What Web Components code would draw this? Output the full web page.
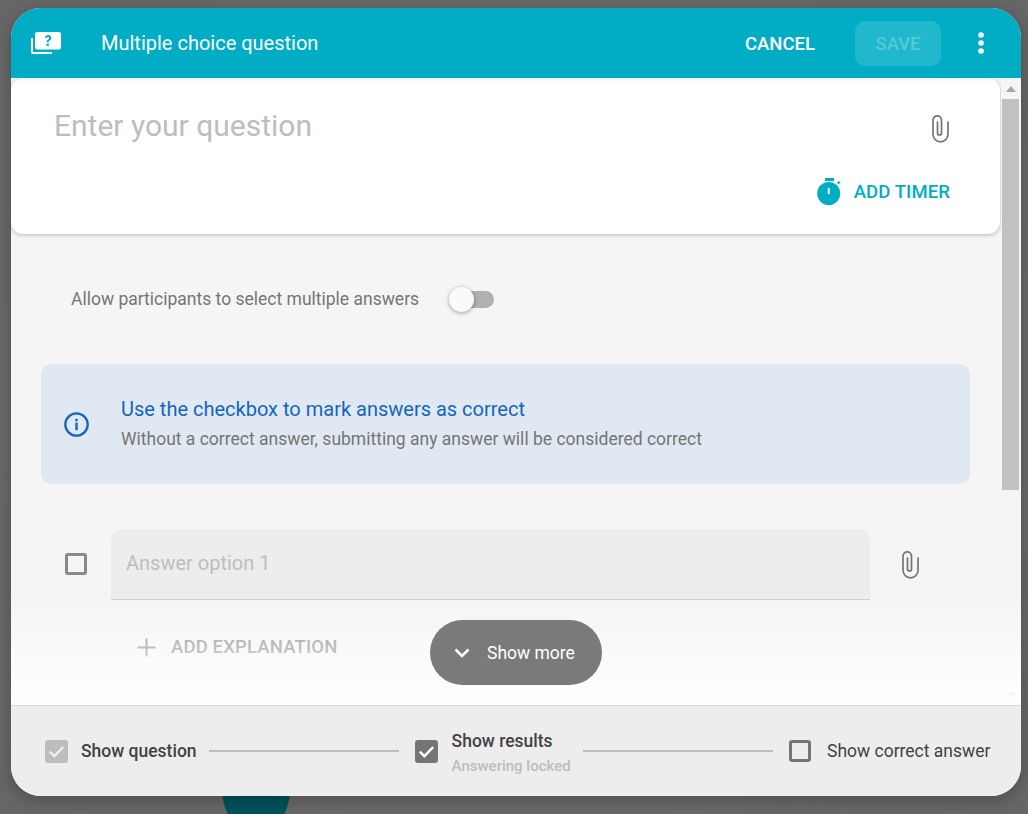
<!DOCTYPE html>
<html lang="en">
<head>
<meta charset="utf-8">
<title>Multiple choice question</title>
<style>
  html, body { margin: 0; height: 100%; overflow: hidden; background: #6b6b6b; font-family: Roboto, "Liberation Sans", sans-serif; }
</style>
</head>
<body>
<question-page></question-page>
<script>
// tiny base class, every element just has styles + markup
class Base extends HTMLElement {
  constructor() {
    super();
    this.attachShadow({ mode: "open" });
  }
  connectedCallback() {
    this.shadowRoot.innerHTML = `<style>${this.constructor.styles}</style>${this.markup()}`;
  }
}

class ClipIcon extends Base {
  static get styles() {
    return `:host { display: block; width: 18px; height: 30px; flex: none; }
      svg { display: block; }`;
  }
  markup() {
    return `<svg width="18" height="30" viewBox="0 0 18 30" fill="none" stroke="#757575" stroke-width="1.7" stroke-linecap="round">
      <path d="M17 8V20.35a7.5 7.5 0 0 1-15 0V6.1a4.25 4.25 0 0 1 8.5 0V19a2 2 0 0 1-4 0V8"/>
    </svg>`;
  }
}

class CheckBox extends Base {
  static get styles() {
    return `:host { display: block; width: 23px; height: 23px; flex: none; }
      div { box-sizing: border-box; width: 100%; height: 100%; border-radius: 3px; border: var(--edge, 3px) solid var(--box, #757575); }
      :host([checked]) div { background: var(--box, #757575); }
      svg { display: block; position: relative; left: -3px; top: -3px; }`;
  }
  markup() {
    const tick = this.hasAttribute("checked")
      ? `<svg width="23" height="23" viewBox="0 0 23 23" fill="none" stroke="${this.getAttribute("tick") || "#fff"}" stroke-width="2.4"><path d="M4.8 11.6l4.6 4.6 8.8-9.2"/></svg>`
      : "";
    return `<div>${tick}</div>`;
  }
}

class DialogHeader extends Base {
  static get styles() {
    return `:host { display: flex; align-items: center; flex: none; height: 70px; background: #00adc5; color: #fff; }
      .logo { margin-left: 19px; display: block; }
      h1 { margin: 0 0 0 40px; font-size: 20px; font-weight: 400; flex: 1; }
      .cancel { font-size: 18.5px; font-weight: 500; padding-top: 2px; }
      .save { box-sizing: border-box; width: 86px; height: 45px; margin: 0 0 0 40px; padding-top: 2px; border-radius: 10px; background: rgba(255,255,255,.13);
        display: flex; align-items: center; justify-content: center; font-size: 18.5px; font-weight: 500; color: rgba(255,255,255,.25); }
      .dots { margin: 0 35px; display: block; }`;
  }
  markup() {
    return `
      <svg class="logo" width="31" height="24" viewBox="0 0 31 24">
        <path d="M1 7h2v14h19v2H3a2 2 0 0 1-2-2z" fill="#fff"/>
        <path d="M5 3a2 2 0 0 1 2-2h22a2 2 0 0 1 2 2v13.5a2 2 0 0 1-2 2H7a2 2 0 0 1-2-2z" fill="#fff"/>
        <path d="M14.9 6.6c.3-1.6 1.5-2.5 3.2-2.5 1.9 0 3.2 1.1 3.2 2.8 0 1.3-.7 2-1.6 2.6-.8.5-1.1.9-1.1 1.8h-2c0-1.5.5-2.3 1.5-2.9.7-.5 1.1-.8 1.1-1.4 0-.7-.5-1.1-1.2-1.1-.8 0-1.2.4-1.4 1.2z" fill="#00adc5"/>
        <rect x="16.5" y="12.6" width="2.3" height="2.3" fill="#00adc5"/>
      </svg>
      <h1>Multiple choice question</h1>
      <span class="cancel">CANCEL</span>
      <span class="save">SAVE</span>
      <svg class="dots" width="10" height="22" viewBox="0 0 10 22" fill="#fff">
        <circle cx="5" cy="3" r="2.8"/><circle cx="5" cy="11" r="2.8"/><circle cx="5" cy="19" r="2.8"/>
      </svg>`;
  }
}

class QuestionCard extends Base {
  static get styles() {
    return `:host { display: block; box-sizing: border-box; height: 156px; margin-right: 1px; padding: 29px 50px 0 43px; background: #fff;
        border-radius: 12px; box-shadow: 0 1px 4px rgba(0,0,0,.25), inset 0 4px 4px -3px rgba(0,0,0,.08); }
      .top { display: flex; justify-content: space-between; align-items: flex-start; height: 71px; }
      .q { font-size: 30px; line-height: 38px; color: #bdbdbd; }
      question-clip { margin: 7px 1px 0 0; }
      .timer { display: flex; justify-content: flex-end; align-items: center; gap: 13px; color: #00adc5; font-size: 18.5px; font-weight: 500; letter-spacing: .1px; }
      .timer svg { display: block; }`;
  }
  markup() {
    return `
      <div class="top"><span class="q">Enter your question</span><question-clip></question-clip></div>
      <div class="timer">
        <svg width="24" height="28" viewBox="0 0 24 28">
          <rect x="8" y="0" width="9" height="3" fill="#00adc5"/>
          <circle cx="11.7" cy="15.5" r="11.5" fill="#00adc5"/>
          <path d="M20 4.6l2-1.6 1.4 1.6-1.8 1.8z" fill="#00adc5"/>
          <rect x="10.8" y="10" width="1.9" height="6.2" fill="#fff"/>
        </svg>
        <span>ADD TIMER</span>
      </div>`;
  }
}

class ToggleRow extends Base {
  static get styles() {
    return `:host { display: flex; align-items: center; padding: 53px 0 0 60px; height: 24px; font-size: 17.5px; color: #757575; }
      .track { position: relative; width: 41px; height: 17px; margin-left: 34px; border-radius: 9px; background: #b0b0b0; }
      .thumb { position: absolute; left: -4px; top: -4px; width: 25px; height: 25px; border-radius: 50%; background: #fafafa;
        box-shadow: 0 1px 4px rgba(0,0,0,.35); }`;
  }
  markup() {
    return `<span>Allow participants to select multiple answers</span><div class="track"><div class="thumb"></div></div>`;
  }
}

class InfoBox extends Base {
  static get styles() {
    return `:host { display: flex; align-items: center; box-sizing: border-box; height: 120px; margin: 53px 31px 0 30px; padding-left: 23px;
        border-radius: 10px; background: #e0e9f2; }
      svg { display: block; flex: none; margin-right: 32px; }
      .txt { padding-bottom: 2px; }
      h2 { margin: 0 0 5px; font-size: 20px; line-height: 26px; font-weight: 400; color: #1565c0; }
      p { margin: 0; font-size: 17.5px; line-height: 24px; color: #757575; }`;
  }
  markup() {
    return `
      <svg width="25" height="25" viewBox="0 0 25 25">
        <circle cx="12.5" cy="12.5" r="11.2" fill="none" stroke="#1565c0" stroke-width="2.3"/>
        <rect x="11.3" y="10.6" width="2.4" height="7.6" fill="#1565c0"/>
        <rect x="11.3" y="6.8" width="2.4" height="2.4" fill="#1565c0"/>
      </svg>
      <div class="txt">
        <h2>Use the checkbox to mark answers as correct</h2>
        <p>Without a correct answer, submitting any answer will be considered correct</p>
      </div>`;
  }
}

class AnswerOption extends Base {
  static get styles() {
    return `:host { display: block; margin-top: 45px; }
      .row { display: flex; align-items: center; padding-left: 54px; }
      question-check { --box: #8a8a8a; --edge: 3px; width: 22px; height: 22px; margin-top: -1px; }
      .field { box-sizing: border-box; width: 759px; height: 71px; margin-left: 24px; padding: 0 0 2px 15px; display: flex; align-items: center;
        font-size: 20px; color: #bdbdbd; background: #ededed; border-bottom: 1px solid #cfcfcf; border-radius: 10px 10px 0 0; }
      question-clip { margin-left: 31px; }
      .add { display: flex; align-items: center; gap: 15px; margin: 36px 0 0 126px; font-size: 18.5px; font-weight: 500; letter-spacing: .15px; color: #8a8a8a; }
      .add svg { display: block; }`;
  }
  markup() {
    return `
      <div class="row">
        <question-check></question-check>
        <div class="field">${this.getAttribute("placeholder")}</div>
        <question-clip></question-clip>
      </div>
      <div class="add">
        <svg width="19" height="19" viewBox="0 0 19 19" fill="#8a8a8a"><rect x="8.5" y="0.5" width="2" height="18"/><rect x="0.5" y="8.5" width="18" height="2"/></svg>
        <span>ADD EXPLANATION</span>
      </div>`;
  }
}

class ScrollTrack extends Base {
  static get styles() {
    return `:host { display: flex; flex-direction: column; flex: none; width: 20px; background: #f5f5f5; }
      .arrow { flex: none; height: 21px; display: flex; align-items: center; justify-content: center; }
      .thumb { flex: none; height: 391px; margin: 0 2px 0 1px; background: #c1c1c1; }
      .rest { flex: 1; }`;
  }
  markup() {
    return `
      <div class="arrow"><svg width="10" height="6" viewBox="0 0 10 6"><path d="M0 6h10L5 0z" fill="#a8a8a8"/></svg></div>
      <div class="thumb"></div>
      <div class="rest"></div>
      <div class="arrow"><svg width="10" height="6" viewBox="0 0 10 6"><path d="M0 0h10L5 6z" fill="#a8a8a8"/></svg></div>`;
  }
}

class ShowMore extends Base {
  static get styles() {
    return `:host { position: absolute; left: 0; right: 0; bottom: 0; height: 105px; display: block;
        background: linear-gradient(rgba(255,255,255,0), #fff); pointer-events: none; }
      .pill { position: absolute; left: 419px; top: 20px; box-sizing: border-box; width: 172px; height: 65px; border-radius: 33px; background: #7a7a7a;
        display: flex; align-items: center; padding-left: 24px; gap: 17px; color: #fff; font-size: 17.5px; }
      svg { display: block; }`;
  }
  markup() {
    return `<div class="pill">
        <svg width="16" height="10" viewBox="0 0 16 10" fill="none" stroke="#fff" stroke-width="2.6"><path d="M1.5 1.5L8 8l6.5-6.5"/></svg>
        <span>Show more</span>
      </div>`;
  }
}

class FlowStep extends Base {
  static get styles() {
    return `:host { display: flex; align-items: center; flex: none; gap: var(--gap, 13px); font-size: 17.5px; color: #424242; white-space: nowrap; }
      :host([bold]) b { font-weight: 500; }
      b { font-weight: 400; display: block; line-height: 24px; }
      small { display: block; margin-top: 4px; font-size: 15px; line-height: 18px; font-weight: 500; color: #bdbdbd; }
      :host([sub]) .txt { margin-top: 2px; }`;
  }
  markup() {
    const sub = this.getAttribute("sub");
    return `<slot></slot><div class="txt"><b>${this.getAttribute("label")}</b>${sub ? `<small>${sub}</small>` : ""}</div>`;
  }
}

class FlowFooter extends Base {
  static get styles() {
    return `:host { display: flex; align-items: center; flex: none; box-sizing: border-box; height: 91px; padding: 0 31px 0 34px; background: #ededed; border-top: 1px solid #dcdcdc; }
      .step-one { width: 152px; }
      .step-two { width: 156px; }
      i { flex: none; width: 190px; height: 2px; margin: 0 16px 0 12px; background: #bdbdbd; }`;
  }
  markup() {
    return `
      <flow-step class="step-one" label="Show question" bold><question-check checked style="--box:#bdbdbd" tick="#ededed"></question-check></flow-step>
      <i></i>
      <flow-step class="step-two" label="Show results" sub="Answering locked" bold style="--gap:13.6px"><question-check checked></question-check></flow-step>
      <i></i>
      <flow-step label="Show correct answer" style="--gap:16px"><question-check style="width:22px;height:22px"></question-check></flow-step>`;
  }
}

class QuestionPage extends Base {
  static get styles() {
    return `:host { display: block; position: relative; width: 1028px; height: 814px; overflow: hidden;
        background: radial-gradient(ellipse at 50% 50%, #707070, #666); }
      .blob { position: absolute; left: 222px; top: 744px; width: 68px; height: 90px; border-radius: 50%; background: #00525c; }
      .dialog { position: relative; box-sizing: border-box; width: 1010px; height: 788px; margin: 8px 0 0 11px; border-radius: 30px; overflow: hidden;
        display: flex; flex-direction: column; background: #f5f5f5; box-shadow: 0 4px 16px rgba(0,0,0,.25); }
      .main { position: relative; flex: 1; min-height: 0; display: flex; }
      .content { flex: 1; min-width: 0; overflow: hidden; }
      `;
  }
  markup() {
    return `
      <div class="blob"></div>
      <div class="dialog">
        <dialog-header></dialog-header>
        <div class="main">
          <div class="content">
            <question-card></question-card>
            <toggle-row></toggle-row>
            <info-box></info-box>
            <answer-option placeholder="Answer option 1"></answer-option>
          </div>
          <scroll-track></scroll-track>
          <show-more></show-more>
        </div>
        <flow-footer></flow-footer>
      </div>`;
  }
}

customElements.define("question-clip", ClipIcon);
customElements.define("question-check", CheckBox);
customElements.define("dialog-header", DialogHeader);
customElements.define("question-card", QuestionCard);
customElements.define("toggle-row", ToggleRow);
customElements.define("info-box", InfoBox);
customElements.define("answer-option", AnswerOption);
customElements.define("scroll-track", ScrollTrack);
customElements.define("show-more", ShowMore);
customElements.define("flow-step", FlowStep);
customElements.define("flow-footer", FlowFooter);
customElements.define("question-page", QuestionPage);
</script>
</body>
</html>
